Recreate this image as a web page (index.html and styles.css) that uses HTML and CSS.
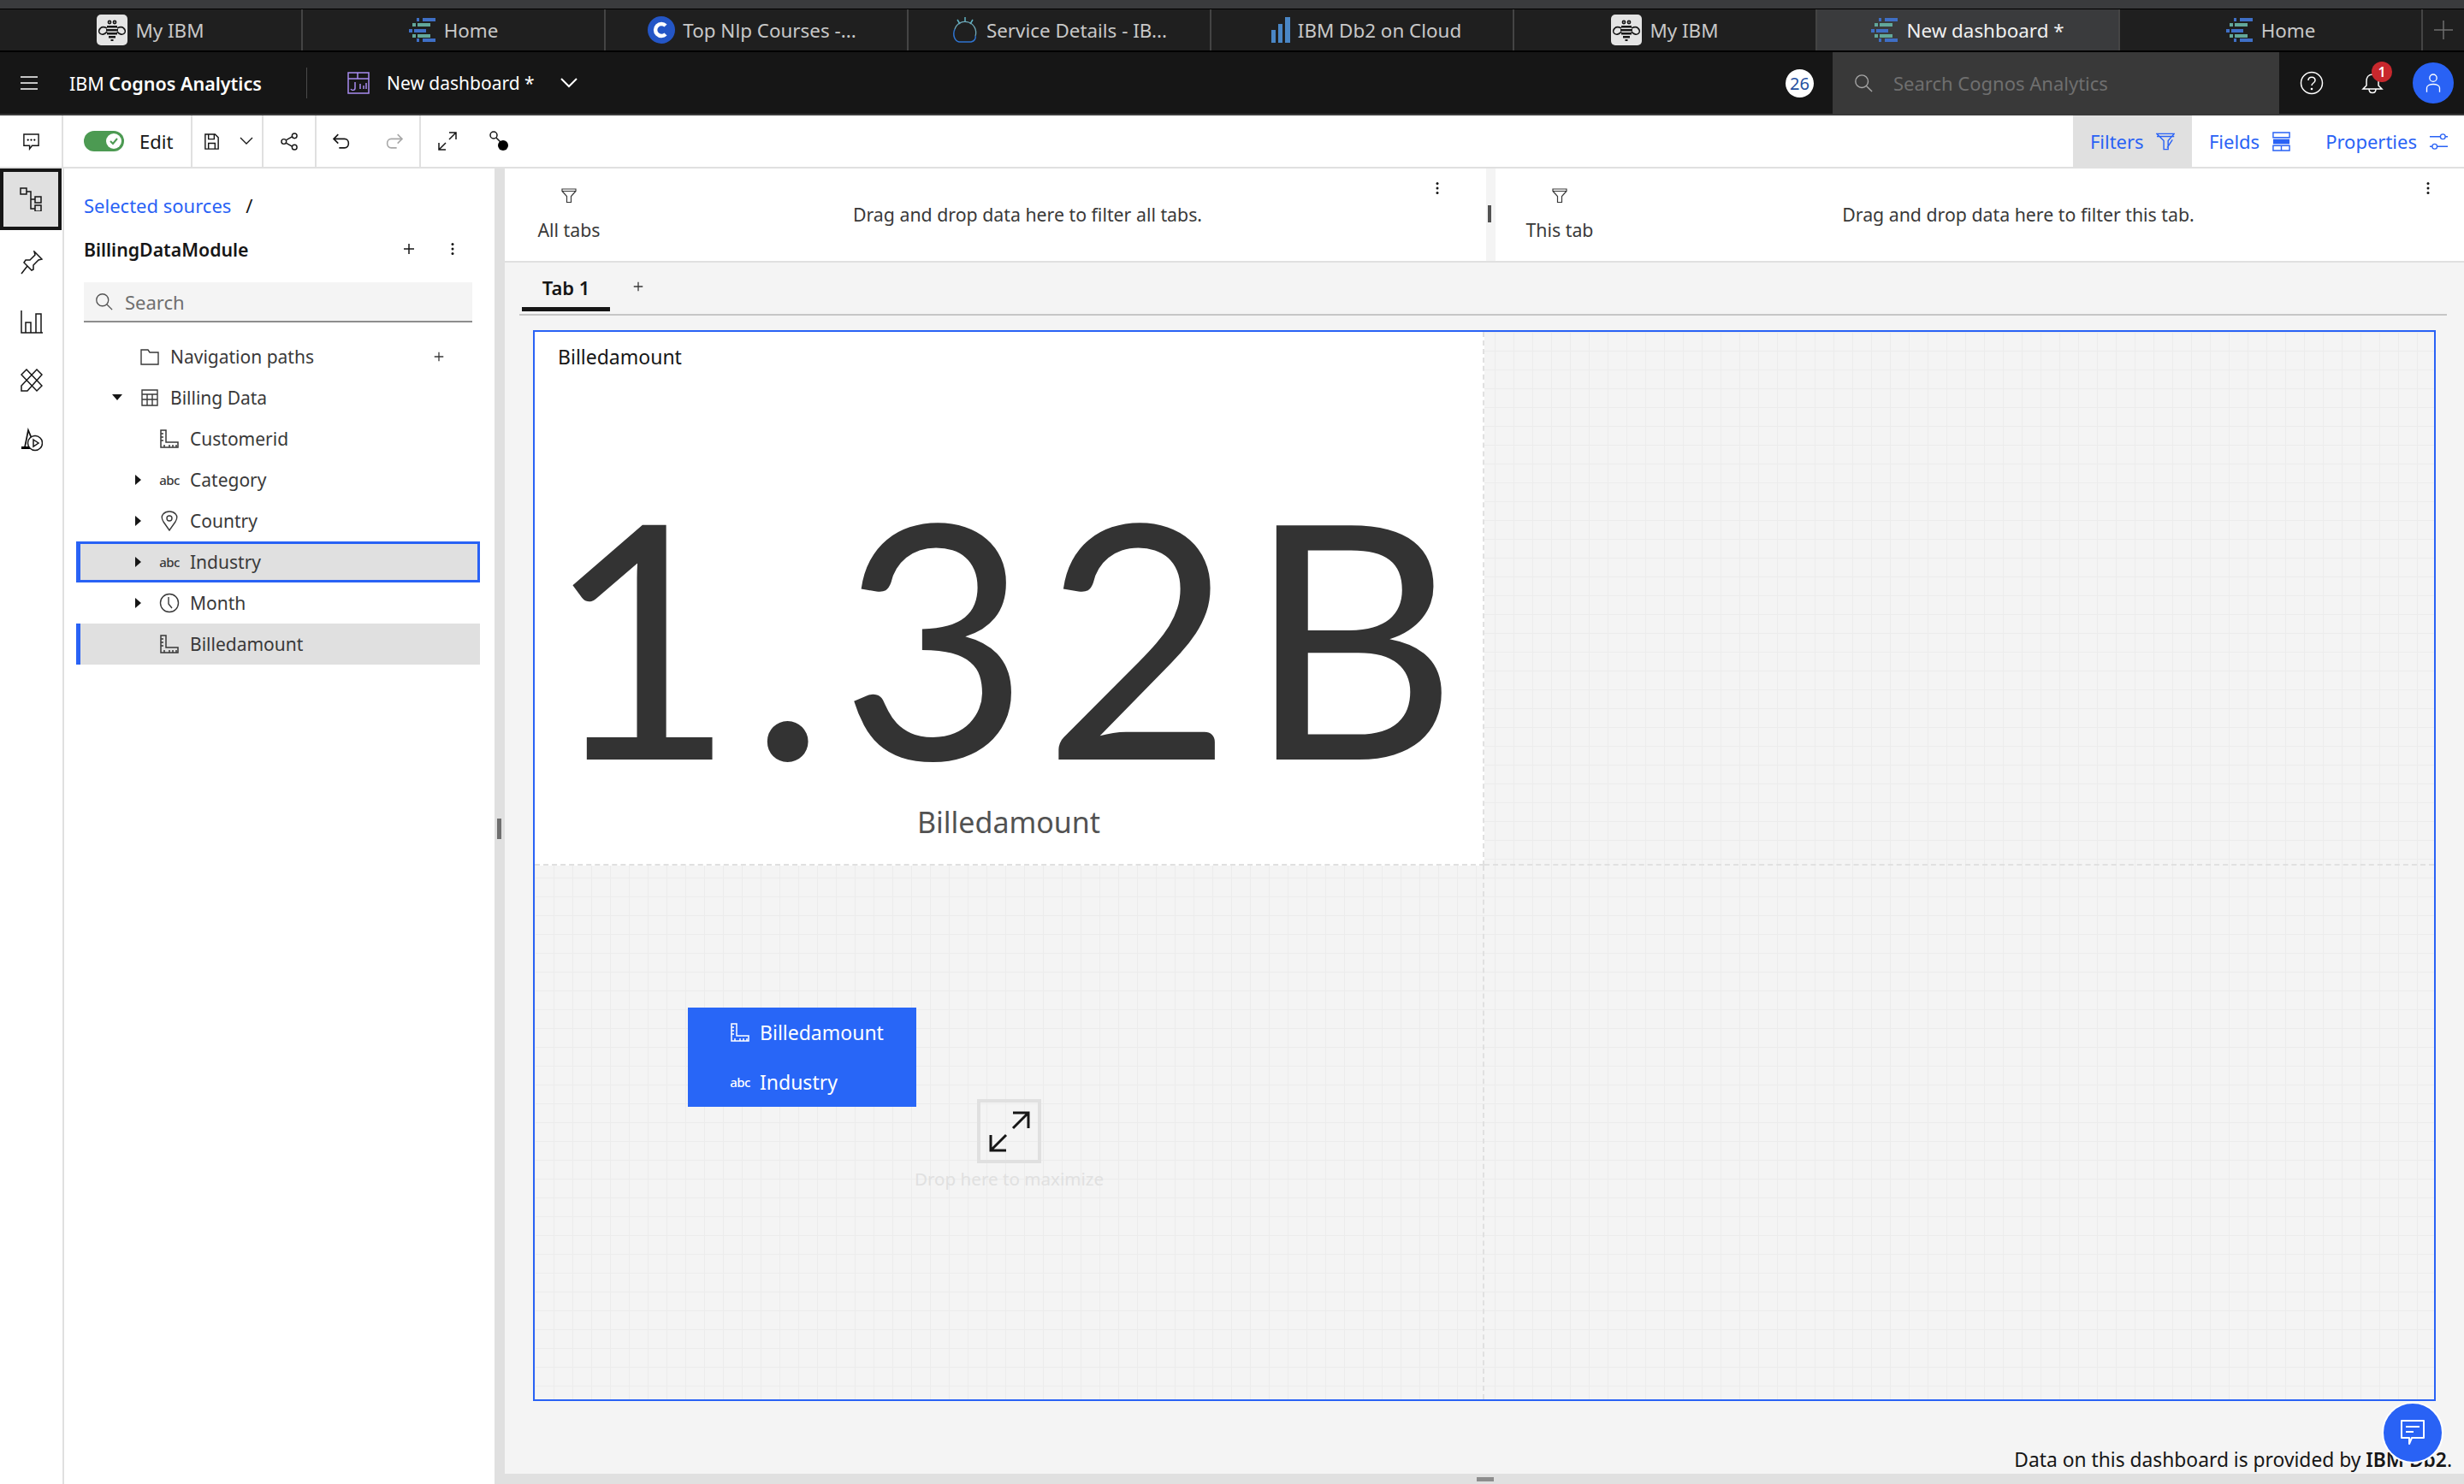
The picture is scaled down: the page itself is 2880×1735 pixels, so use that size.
FILE: index.html
```html
<!DOCTYPE html>
<html>
<head>
    <meta charset="utf-8">
    <title>New dashboard - IBM Cognos Analytics</title>
    <link rel="stylesheet" href="styles.css">
</head>
<body>

<svg class="defs" width="0" height="0">
    <symbol id="i-bee" viewBox="0 0 36 36">
        <rect width="36" height="36" rx="5" fill="#e4e4e4"/>
        <g fill="none" stroke="#161616" stroke-width="1.6">
            <circle cx="15" cy="9" r="1.6"/><circle cx="21" cy="9" r="1.6"/>
            <path d="M12 16 C5 12 2 18 3 21 C5 25 10 23 12 20"/>
            <path d="M24 16 C31 12 34 18 33 21 C31 25 26 23 24 20"/>
        </g>
        <path d="M12 13h12v2.500H12zM11 17h14v2.500H11zM12 21h12v2.500H12zM14 25h8v2.500h-8zM16.500 29h3v2h-3z" fill="#161616"/>
    </symbol>
    <symbol id="i-home" viewBox="0 0 32 28">
        <path d="M9 0h3v4H9zM16 0h15v4H16zM9 24h3v4H9zM16 24h15v4H16zM0 13h4v4H0zM6 13h14v4H6z" fill="#3f6fc6"/>
        <path d="M4 6h4v4H4zM10 6h15v4H10zM4 19h4v4H4zM10 19h15v4H10z" fill="#62a89b"/>
    </symbol>
    <symbol id="i-ruler" viewBox="0 0 24 24">
        <path d="M2 2h6v14h14v6H2z M2 6h3M2 10h3M2 14h3M12 22v-3M16 22v-3M20 22v-3M6 22v-3" fill="none" stroke="currentColor" stroke-width="1.500"/>
    </symbol>
    <symbol id="i-plus" viewBox="0 0 16 16">
        <path d="M8 2v12M2 8h12" fill="none" stroke="currentColor" stroke-width="1.500"/>
    </symbol>
    <symbol id="i-dots" viewBox="0 0 16 16">
        <circle cx="8" cy="2.500" r="1.500" fill="currentColor"/><circle cx="8" cy="8" r="1.500" fill="currentColor"/><circle cx="8" cy="13.500" r="1.500" fill="currentColor"/>
    </symbol>
    <symbol id="i-search" viewBox="0 0 24 24">
        <circle cx="10" cy="10" r="8" fill="none" stroke="currentColor" stroke-width="1.500"/>
        <path d="M16 16l7 7" fill="none" stroke="currentColor" stroke-width="1.500"/>
    </symbol>
    <symbol id="i-funnel" viewBox="0 0 18 18">
        <path d="M1 1h16v2.500l-5.500 6v7h-5v-7L1 3.500z M1 3.500h16" fill="none" stroke="currentColor" stroke-width="1.200"/>
    </symbol>
</svg>

<div class="window-strip"></div>

<div class="browser-tabs">
    <div class="browser-tab"><svg class="tab-bee"><use href="#i-bee"/></svg>My IBM</div>
    <div class="browser-tab"><svg class="tab-home"><use href="#i-home"/></svg>Home</div>
    <div class="browser-tab courses">
        <svg class="tab-round" viewBox="0 0 32 32"><circle cx="16" cy="16" r="16" fill="#2456c6"/><path d="M21 11a7 7 0 1 0 0 10" fill="none" stroke="#fff" stroke-width="4.500"/></svg>
        Top Nlp Courses -...
    </div>
    <div class="browser-tab">
        <svg class="tab-round" viewBox="0 0 32 32"><path d="M16 1v6M7 4l3 5M25 4l-3 5" stroke="#5fb3c4" stroke-width="1.500" fill="none"/><path d="M4 15a12 12 0 0 1 24 8" stroke="#6ea8b8" stroke-width="1.300" fill="none"/><path d="M4 15c-3 7 0 14 5 15h14c4-1 6-4 5-7" stroke="#2f74d0" stroke-width="1.500" fill="none"/></svg>
        Service Details - IB...
    </div>
    <div class="browser-tab db2">
        <svg class="tab-bars" viewBox="0 0 22 30"><path d="M0 15h5v15H0zM8 8h5v22H8zM16 0h6v30h-6z" fill="#4a86c5"/></svg>
        IBM Db2 on Cloud
    </div>
    <div class="browser-tab"><svg class="tab-bee"><use href="#i-bee"/></svg>My IBM</div>
    <div class="browser-tab active"><svg class="tab-home"><use href="#i-home"/></svg>New dashboard *</div>
    <div class="browser-tab"><svg class="tab-home"><use href="#i-home"/></svg>Home</div>
    <div class="browser-add"><svg viewBox="0 0 24 24"><path d="M12 1v22M1 12h22" stroke="#6f6f6f" stroke-width="1.500" fill="none"/></svg></div>
</div>

<header class="app-header">
    <svg class="hamburger" viewBox="0 0 20 16"><path d="M0 1h20M0 8h20M0 15h20" stroke="#fff" stroke-width="1.500"/></svg>
    <div class="brand">IBM <b>Cognos Analytics</b></div>
    <div class="brand-sep"></div>
    <svg class="dash-icon" viewBox="0 0 26 26"><path d="M1 1h24v24H1zM1 8h24M12 1v7M9 12v7c0 3-4 3-5 1M15 14v6M19 16v4M22 13v7" fill="none" stroke="#a88cf0" stroke-width="1.500"/></svg>
    <div class="dash-name">New dashboard *</div>
    <svg class="dash-chevron" viewBox="0 0 20 12"><path d="M1 1l9 9 9-9" fill="none" stroke="#fff" stroke-width="2"/></svg>
    <div class="trial-badge">26</div>
    <div class="global-search">
        <svg class="global-search-icon"><use href="#i-search"/></svg>
        <span>Search Cognos Analytics</span>
    </div>
    <svg class="help-icon" viewBox="0 0 28 28"><circle cx="14" cy="14" r="12.500" fill="none" stroke="#fff" stroke-width="1.500"/><path d="M10 11c0-5 8-5 8 0 0 3-4 3-4 6" fill="none" stroke="#fff" stroke-width="1.500"/><circle cx="14" cy="21" r="1.300" fill="#fff"/></svg>
    <div class="bell">
        <svg viewBox="0 0 26 26"><path d="M13 3c-5 0-7 4-7 8v5l-4 4h22l-4-4v-5c0-4-2-8-7-8zM9 20c0 6 8 6 8 0" fill="none" stroke="#fff" stroke-width="1.500"/></svg>
        <span class="bell-count">1</span>
    </div>
    <div class="avatar">
        <svg viewBox="0 0 24 28"><circle cx="12" cy="7" r="5" fill="none" stroke="#fff" stroke-width="1.600"/><path d="M3 27v-6c0-7 18-7 18 0v6" fill="none" stroke="#fff" stroke-width="1.600"/></svg>
    </div>
</header>

<div class="toolbar">
    <div class="tool-group first">
        <svg class="tool-icon" viewBox="0 0 22 22"><path d="M2 2h18v14h-8l-3 4v-4H2z" fill="none" stroke="#161616" stroke-width="1.500"/><circle cx="7" cy="9" r="1.200"/><circle cx="11" cy="9" r="1.200"/><circle cx="15" cy="9" r="1.200"/></svg>
    </div>
    <div class="tool-group edit">
        <div class="toggle"><span class="toggle-knob"><svg viewBox="0 0 12 12"><path d="M2 6l3 3 5-6" fill="none" stroke="#4c9a52" stroke-width="2"/></svg></span></div>
        <span>Edit</span>
    </div>
    <div class="tool-group save">
        <svg class="tool-icon" viewBox="0 0 20 22"><path d="M2 2h12l4 4v14H2zM6 2v6h7V2M6 20v-7h8v7" fill="none" stroke="#161616" stroke-width="1.500"/></svg>
        <svg class="tool-chevron" viewBox="0 0 16 10"><path d="M1 1l7 7 7-7" fill="none" stroke="#161616" stroke-width="1.300"/></svg>
    </div>
    <div class="tool-group share">
        <svg class="tool-icon" viewBox="0 0 22 22"><circle cx="4" cy="11" r="3" fill="none" stroke="#161616" stroke-width="1.500"/><circle cx="17" cy="4" r="3" fill="none" stroke="#161616" stroke-width="1.500"/><circle cx="17" cy="18" r="3" fill="none" stroke="#161616" stroke-width="1.500"/><path d="M7 9l7-4M7 13l7 4" stroke="#161616" stroke-width="1.500"/></svg>
    </div>
    <div class="tool-group history">
        <svg class="tool-icon" viewBox="0 0 20 20"><path d="M6 2L1 7l5 5M1 7h12c6 0 6 10 0 10H7" fill="none" stroke="#161616" stroke-width="1.500"/></svg>
        <svg class="tool-icon" viewBox="0 0 20 20"><path d="M14 2l5 5-5 5M19 7H7c-6 0-6 10 0 10h6" fill="none" stroke="#a8a8a8" stroke-width="1.500"/></svg>
    </div>
    <div class="tool-group fit">
        <svg class="tool-icon wide" viewBox="0 0 24 24"><path d="M14 2h8v8M22 2L14 10M10 22H2v-8M2 22l8-8" fill="none" stroke="#161616" stroke-width="1.500"/></svg>
        <svg class="tool-icon wide" viewBox="0 0 24 24"><circle cx="6" cy="5" r="4" fill="none" stroke="#161616" stroke-width="1.500"/><path d="M9 8l6 6" stroke="#161616" stroke-width="1.500"/><circle cx="17" cy="17" r="6"/></svg>
    </div>
    <div class="tool-tabs">
        <div class="tool-tab selected">Filters
            <svg viewBox="0 0 22 22"><path d="M1 2h20l-7 8v10H9V10zM1 5h20M13 18l6-9" fill="none" stroke="#2962f5" stroke-width="1.400"/></svg>
        </div>
        <div class="tool-tab">Fields
            <svg viewBox="0 0 24 24"><path d="M2 1h20v6H2zM2 17h20v6H2zM12 17v6" fill="none" stroke="#2962f5" stroke-width="1.500"/><path d="M2 9h20v6H2z" fill="#2962f5"/></svg>
        </div>
        <div class="tool-tab props">Properties
            <svg viewBox="0 0 24 22"><path d="M1 5h13M20 5h3M1 17h3M10 17h13" stroke="#2962f5" stroke-width="1.400"/><circle cx="17" cy="5" r="3" fill="none" stroke="#2962f5" stroke-width="1.400"/><circle cx="7" cy="17" r="3" fill="none" stroke="#2962f5" stroke-width="1.400"/></svg>
        </div>
    </div>
</div>

<div class="workspace">
    <nav class="rail">
        <div class="rail-item selected">
            <svg viewBox="0 0 26 28"><path d="M1 1h7v7H1zM18 11h7v7h-7zM18 21h7v7h-7zM8 5h5v20h5M13 14h5" fill="none" stroke="#161616" stroke-width="1.500"/></svg>
        </div>
        <div class="rail-item">
            <svg viewBox="0 0 26 28"><path d="M16 1l9 9-4 1-6 6 0 5-2 1-9-9 2-3 5 0 6-6zM8 18l-7 9" fill="none" stroke="#161616" stroke-width="1.500"/></svg>
        </div>
        <div class="rail-item">
            <svg viewBox="0 0 26 28"><path d="M1 1v26h25M6 27v-12h6v12M18 27V5h6v22" fill="none" stroke="#161616" stroke-width="1.500"/></svg>
        </div>
        <div class="rail-item">
            <svg viewBox="0 0 26 28"><path d="M7 1L1 7l18 19 6-6zM19 1l6 6L8 26H1v-6z" fill="none" stroke="#161616" stroke-width="1.500"/></svg>
        </div>
        <div class="rail-item">
            <svg viewBox="0 0 26 28"><path d="M1 23h10M5 23l4-20 5 12" fill="none" stroke="#161616" stroke-width="1.800"/><path d="M1 25h11v-3H1z"/><circle cx="17" cy="18" r="8.500" fill="#fff" stroke="#161616" stroke-width="1.500"/><path d="M15 14l6 4-6 4z" fill="none" stroke="#161616" stroke-width="1.500"/></svg>
        </div>
    </nav>

    <aside class="sidebar">
        <div class="crumbs"><a>Selected sources</a><span>/</span></div>
        <div class="module">
            <strong>BillingDataModule</strong>
            <svg class="module-plus"><use href="#i-plus"/></svg>
            <svg class="module-dots"><use href="#i-dots"/></svg>
        </div>
        <div class="tree-search">
            <svg><use href="#i-search"/></svg>
            <span>Search</span>
        </div>
        <div class="tree">
            <div class="tree-row level-1">
                <span class="caret"></span>
                <svg class="node-icon" viewBox="0 0 24 24"><path d="M2 4h8l2 3h10v14H2z" fill="none" stroke="currentColor" stroke-width="1.400"/></svg>
                <span>Navigation paths</span>
                <svg class="row-plus"><use href="#i-plus"/></svg>
            </div>
            <div class="tree-row level-1">
                <span class="caret open"></span>
                <svg class="node-icon" viewBox="0 0 24 24"><path d="M3 3h18v18H3zM3 8h18M3 14h18M9 8v13M15 8v13" fill="none" stroke="currentColor" stroke-width="1.400"/></svg>
                <span>Billing Data</span>
            </div>
            <div class="tree-row level-2">
                <span class="caret"></span>
                <svg class="node-icon"><use href="#i-ruler"/></svg>
                <span>Customerid</span>
            </div>
            <div class="tree-row level-2">
                <span class="caret closed"></span>
                <span class="abc">abc</span>
                <span>Category</span>
            </div>
            <div class="tree-row level-2">
                <span class="caret closed"></span>
                <svg class="node-icon" viewBox="0 0 24 24"><path d="M12 23L5 13c-5-8 2-12 7-12s12 4 7 12z" fill="none" stroke="currentColor" stroke-width="1.400"/><circle cx="12" cy="9" r="3" fill="none" stroke="currentColor" stroke-width="1.400"/></svg>
                <span>Country</span>
            </div>
            <div class="tree-row level-2 focused">
                <span class="caret closed"></span>
                <span class="abc">abc</span>
                <span>Industry</span>
            </div>
            <div class="tree-row level-2">
                <span class="caret closed"></span>
                <svg class="node-icon" viewBox="0 0 24 24"><circle cx="12" cy="12" r="10.500" fill="none" stroke="currentColor" stroke-width="1.400"/><path d="M11 5v8l4 5" fill="none" stroke="currentColor" stroke-width="1.400"/></svg>
                <span>Month</span>
            </div>
            <div class="tree-row level-2 picked">
                <span class="caret"></span>
                <svg class="node-icon"><use href="#i-ruler"/></svg>
                <span>Billedamount</span>
            </div>
        </div>
    </aside>

    <div class="splitter"><span class="splitter-grip"></span></div>

    <main class="board">
        <div class="filter-row">
            <section class="filter-panel all">
                <div class="filter-label"><svg><use href="#i-funnel"/></svg><span>All tabs</span></div>
                <div class="filter-message">Drag and drop data here to filter all tabs.</div>
                <svg class="filter-dots"><use href="#i-dots"/></svg>
            </section>
            <div class="filter-gap"><span></span></div>
            <section class="filter-panel this">
                <div class="filter-label"><svg><use href="#i-funnel"/></svg><span>This tab</span></div>
                <div class="filter-message">Drag and drop data here to filter this tab.</div>
                <svg class="filter-dots"><use href="#i-dots"/></svg>
            </section>
        </div>

        <div class="tab-row">
            <div class="tab-current">Tab 1</div>
            <svg class="tab-plus"><use href="#i-plus"/></svg>
        </div>

        <div class="canvas">
            <div class="widget">
                <div class="widget-title">Billedamount</div>
                <div class="widget-value">1.32B</div>
                <div class="widget-label">Billedamount</div>
            </div>
            <div class="cell cell-right"></div>
            <div class="cell cell-low"></div>
            <div class="cell"></div>

            <div class="drag-tile">
                <div class="drag-row"><svg class="node-icon"><use href="#i-ruler"/></svg>Billedamount</div>
                <div class="drag-row"><span class="abc">abc</span>Industry</div>
            </div>
            <div class="maximize">
                <div class="maximize-box">
                    <svg viewBox="0 0 48 50"><path d="M28 3h18v18M46 3L28 21M20 29L2 47M2 29v18h18" fill="none" stroke="#161616" stroke-width="3"/></svg>
                </div>
                <span>Drop here to maximize</span>
            </div>
        </div>

        <footer class="board-note">Data on this dashboard is provided by&nbsp;<b>IBM Db2</b>.</footer>
        <div class="board-bottom"><span></span></div>
    </main>
</div>

<div class="chat-fab">
    <svg viewBox="0 0 30 32"><path d="M2 2h26v20H14l-3 7v-7H2z" fill="none" stroke="#fff" stroke-width="2" stroke-linejoin="round"/><path d="M7 9h16M7 15h9" stroke="#fff" stroke-width="2"/></svg>
</div>

</body>
</html>
```
FILE: styles.css
```css
* {
    box-sizing: border-box;
}

html, body {
    margin: 0;
    height: 100%;
}

body {
    position: relative;
    display: flex;
    flex-direction: column;
    height: 1735px;
    overflow: hidden;
    font-family: "Noto Sans", "Liberation Sans", sans-serif;
    font-size: 22px;
    color: #161616;
    background: #fff;
}

.defs {
    position: absolute;
}

/* browser chrome */
.window-strip {
    height: 10px;
    background: #3a3b3d;
}

.browser-tabs {
    display: flex;
    height: 51px;
    background: #1f1f1f;
    border-top: 1px solid #000;
    border-bottom: 2px solid #000;
    color: #c8c8c8;
    font-size: 22.4px;
}

.browser-tab {
    flex: 0 0 354px;
    display: flex;
    align-items: center;
    justify-content: center;
    gap: 9px;
    border-right: 2px solid #444;
    white-space: nowrap;
}

.browser-tab.courses {
    padding-right: 10px;
}

.browser-tab.db2 {
    padding-left: 10px;
}

.browser-tab.active {
    background: #3a3b3d;
    color: #f0f0f0;
}

.browser-add {
    flex: 1;
    display: flex;
    align-items: center;
    justify-content: center;
}

.browser-add svg {
    width: 24px;
    height: 24px;
}

.tab-bee {
    width: 36px;
    height: 36px;
}

.tab-home {
    width: 32px;
    height: 28px;
}

.tab-round {
    width: 32px;
    height: 32px;
}

.tab-bars {
    width: 22px;
    height: 30px;
}

/* app header */
.app-header {
    display: flex;
    align-items: center;
    height: 74px;
    padding-left: 24px;
    background: #161616;
    border-bottom: 2px solid #3a3a3a;
    color: #fff;
}

.hamburger {
    width: 20px;
    height: 16px;
}

.brand {
    margin-left: 37px;
    width: 225px;
    font-size: 21.5px;
    white-space: nowrap;
}

.brand b {
    font-weight: 600;
}

.brand-sep {
    width: 1px;
    height: 36px;
    margin-left: 52px;
    background: #4a4a4a;
}

.dash-icon {
    width: 26px;
    height: 26px;
    margin-left: 47px;
}

.dash-name {
    margin-left: 20px;
    width: 173px;
    font-size: 21px;
    white-space: nowrap;
}

.dash-chevron {
    width: 20px;
    height: 12px;
    margin-left: 30px;
}

.trial-badge {
    display: flex;
    align-items: center;
    justify-content: center;
    width: 33px;
    height: 33px;
    margin-left: auto;
    border-radius: 50%;
    background: #fff;
    color: #24509f;
    font-size: 20px;
}

.global-search {
    display: flex;
    align-items: center;
    align-self: stretch;
    width: 522px;
    margin-left: 22px;
    padding-left: 25px;
    background: #393939;
    color: #6f6f6f;
}

.global-search-icon {
    width: 22px;
    height: 22px;
    margin-right: 24px;
    color: #a8a8a8;
}

.help-icon {
    width: 28px;
    height: 28px;
    margin-left: 24px;
}

.bell {
    position: relative;
    width: 26px;
    height: 26px;
    margin-left: 44px;
}

.bell svg {
    width: 26px;
    height: 26px;
}

.bell-count {
    position: absolute;
    top: -12px;
    left: 12px;
    width: 24px;
    height: 24px;
    border-radius: 50%;
    background: #c8282d;
    font-size: 16px;
    line-height: 24px;
    text-align: center;
    font-weight: 600;
}

.avatar {
    display: flex;
    align-items: center;
    justify-content: center;
    width: 48px;
    height: 48px;
    margin-left: 34px;
    margin-right: 12px;
    border-radius: 50%;
    background: #2962f5;
}

.avatar svg {
    width: 20px;
    height: 26px;
}

/* toolbar */
.toolbar {
    display: flex;
    height: 62px;
    background: #fff;
    border-bottom: 2px solid #e0e0e0;
}

.tool-group {
    display: flex;
    align-items: center;
    justify-content: center;
    border-right: 2px solid #e0e0e0;
}

.tool-group.first {
    width: 74px;
}

.tool-group.edit {
    width: 151px;
    justify-content: flex-start;
    padding-left: 24px;
    gap: 18px;
}

.tool-group.save {
    width: 83px;
    padding-left: 2px;
    gap: 22px;
}

.tool-group.share {
    width: 62px;
}

.tool-group.history {
    width: 122px;
    gap: 40px;
}

.tool-group.fit {
    width: 134px;
    justify-content: flex-start;
    padding-left: 19px;
    gap: 36px;
    border-right: 0;
}

.tool-icon {
    width: 21px;
    height: 21px;
}

.tool-icon.wide {
    width: 24px;
    height: 24px;
}

.tool-chevron {
    width: 16px;
    height: 10px;
}

.toggle {
    display: flex;
    align-items: center;
    justify-content: flex-end;
    width: 47px;
    height: 24px;
    padding-right: 3px;
    border-radius: 12px;
    background: #4c9a52;
}

.toggle-knob {
    display: flex;
    align-items: center;
    justify-content: center;
    width: 18px;
    height: 18px;
    border-radius: 50%;
    background: #fff;
}

.toggle-knob svg {
    width: 12px;
    height: 12px;
}

.tool-tabs {
    display: flex;
    margin-left: auto;
}

.tool-tab {
    display: flex;
    align-items: center;
    gap: 14px;
    padding: 0 20px;
    color: #2962f5;
}

.tool-tab.selected {
    background: #e0e0e0;
    width: 139px;
}

.tool-tab.props {
    padding-right: 18px;
}

.tool-tab svg {
    width: 23px;
    height: 23px;
}

/* main part */
.workspace {
    flex: 1;
    display: flex;
    min-height: 0;
}

.rail {
    flex: 0 0 75px;
    border-right: 2px solid #e0e0e0;
}

.rail-item {
    display: flex;
    align-items: center;
    justify-content: center;
    height: 69px;
}

.rail-item svg {
    width: 26px;
    height: 28px;
}

.rail-item.selected {
    width: 72px;
    height: 72px;
    margin-bottom: 3px;
    background: #e0e0e0;
    border: 4px solid #161616;
}

.sidebar {
    flex: 0 0 503px;
    background: #fff;
    color: #393939;
    font-size: 21px;
}

.crumbs {
    display: flex;
    gap: 17px;
    height: 28px;
    margin: 29px 0 0 23px;
    font-size: 22px;
    line-height: 28px;
}

.crumbs a {
    color: #2962f5;
}

.crumbs span {
    color: #161616;
}

.module {
    display: flex;
    align-items: center;
    height: 30px;
    margin: 22px 0 0 23px;
    font-size: 21.3px;
    color: #161616;
}

.module strong {
    font-weight: 600;
    width: 372px;
}

.module-plus {
    width: 16px;
    height: 16px;
}

.module-dots {
    width: 16px;
    height: 16px;
    margin-left: 35px;
}

.tree-search {
    display: flex;
    align-items: center;
    width: 454px;
    height: 47px;
    margin: 24px 0 0 23px;
    padding-left: 13px;
    background: #f4f4f4;
    border-bottom: 2px solid #8d8d8d;
    color: #6f6f6f;
    font-size: 22px;
}

.tree-search svg {
    width: 21px;
    height: 21px;
    margin-right: 14px;
    color: #525252;
}

.tree {
    margin: 16px 17px 0 14px;
}

.tree-row {
    display: flex;
    align-items: center;
    gap: 12px;
    height: 48px;
}

.tree-row.level-1 {
    padding-left: 38px;
}

.tree-row.level-2 {
    padding-left: 61px;
}

.tree-row.focused {
    background: #e0e0e0;
    box-shadow: inset 5px 0 0 #2962f5, inset -3px 0 0 #2962f5, inset 0 3px 0 #2962f5, inset 0 -3px 0 #2962f5;
}

.tree-row.picked {
    background: #e0e0e0;
    box-shadow: inset 5px 0 0 #2962f5;
}

.caret {
    position: relative;
    flex: 0 0 24px;
    height: 16px;
}

.caret.open::before {
    content: "";
    position: absolute;
    left: 4px;
    top: 4px;
    border-left: 6px solid transparent;
    border-right: 6px solid transparent;
    border-top: 7px solid #161616;
}

.caret.closed::before {
    content: "";
    position: absolute;
    left: 8px;
    top: 2px;
    border-top: 6px solid transparent;
    border-bottom: 6px solid transparent;
    border-left: 7px solid #161616;
}

.node-icon {
    flex: 0 0 24px;
    width: 24px;
    height: 24px;
}

.abc {
    flex: 0 0 24px;
    font-size: 15px;
    font-weight: 500;
    text-align: center;
    letter-spacing: -0.5px;
}

.row-plus {
    width: 14px;
    height: 14px;
    margin-left: auto;
    margin-right: 41px;
}

.splitter {
    flex: 0 0 12px;
    position: relative;
    background: #e0e0e0;
}

.splitter-grip {
    position: absolute;
    left: 3px;
    top: 760px;
    width: 5px;
    height: 24px;
    background: #6f6f6f;
}

.board {
    flex: 1;
    display: flex;
    flex-direction: column;
    min-width: 0;
    background: #f4f4f4;
}

.filter-row {
    display: flex;
    height: 110px;
    border-bottom: 2px solid #e0e0e0;
}

.filter-panel {
    display: flex;
    background: #fff;
    color: #393939;
    font-size: 21.3px;
}

.filter-panel.all {
    width: 1147px;
}

.filter-panel.this {
    flex: 1;
}

.filter-gap {
    flex: 0 0 11px;
    position: relative;
    background: #f4f4f4;
}

.filter-gap span {
    position: absolute;
    left: 2px;
    top: 43px;
    width: 4px;
    height: 20px;
    background: #525252;
}

.filter-label {
    flex: 0 0 150px;
    display: flex;
    flex-direction: column;
    align-items: center;
    padding-top: 23px;
    gap: 16px;
}

.filter-label svg {
    width: 18px;
    height: 18px;
}

.filter-message {
    flex: 1;
    display: flex;
    align-items: center;
    justify-content: center;
    padding-bottom: 2px;
}

.filter-dots {
    flex: 0 0 16px;
    width: 16px;
    height: 16px;
    margin: 15px 34px 0 10px;
    color: #161616;
}

.filter-panel.all .filter-dots {
    margin-right: 49px;
}

.tab-row {
    display: flex;
    align-items: flex-start;
    height: 62px;
    margin: 0 20px 0 17px;
    border-bottom: 2px solid #c6c6c6;
}

.tab-current {
    width: 103px;
    height: 57px;
    margin-left: 3px;
    padding-top: 14px;
    font-weight: 600;
    text-align: center;
    border-bottom: 5px solid #161616;
}

.tab-plus {
    width: 14px;
    height: 14px;
    margin: 21px 0 0 26px;
    color: #393939;
}

.canvas {
    position: relative;
    flex: 1;
    display: grid;
    grid-template-columns: 1110px 1fr;
    grid-template-rows: 624px 1fr;
    margin: 17px 33px 0;
    border: 2px solid #2962f5;
    background-color: #f4f4f4;
    background-image:
        linear-gradient(#ececec 1px, transparent 1px),
        linear-gradient(90deg, #ececec 1px, transparent 1px);
    background-size: 22px 22px;
}

.widget {
    display: flex;
    flex-direction: column;
    background: #fff;
    border-right: 2px dashed #e0e0e0;
    border-bottom: 2px dashed #e0e0e0;
}

.widget-title {
    padding: 14px 0 0 27px;
    font-size: 23px;
    line-height: 30px;
    color: #161616;
}

.widget-value {
    margin-top: 138px;
    font-family: "Lato", sans-serif;
    font-size: 382px;
    line-height: 340px;
    letter-spacing: 16px;
    text-align: center;
    color: #333;
    white-space: nowrap;
}

.widget-label {
    margin-top: 29px;
    font-size: 34px;
    line-height: 44px;
    text-align: center;
    color: #525252;
}

.cell-right {
    border-bottom: 2px dashed #e0e0e0;
}

.cell-low {
    border-right: 2px dashed #e0e0e0;
}

.drag-tile {
    position: absolute;
    left: 179px;
    top: 790px;
    width: 267px;
    height: 116px;
    padding-left: 49px;
    background: #2866f7;
    color: #fff;
    font-size: 23px;
}

.drag-row {
    display: flex;
    align-items: center;
    gap: 11px;
    height: 58px;
}

.maximize {
    position: absolute;
    left: 444px;
    top: 897px;
    width: 221px;
    display: flex;
    flex-direction: column;
    align-items: center;
    color: #e0e0e0;
    font-size: 20.6px;
}

.maximize-box {
    display: flex;
    align-items: center;
    justify-content: center;
    width: 75px;
    height: 75px;
    border: 4px solid #e0e0e0;
}

.maximize-box svg {
    width: 48px;
    height: 50px;
}

.maximize span {
    margin-top: 4px;
    white-space: nowrap;
}

.board-note {
    display: flex;
    justify-content: flex-end;
    align-items: flex-end;
    height: 85px;
    padding-right: 14px;
    font-size: 22.8px;
    line-height: 32px;
}

.board-note b {
    font-weight: 600;
}

.board-bottom {
    position: relative;
    height: 12px;
    background: #e0e0e0;
}

.board-bottom span {
    position: absolute;
    left: 1136px;
    top: 4px;
    width: 20px;
    height: 5px;
    background: #8d8d8d;
}

.chat-fab {
    position: absolute;
    right: 24px;
    bottom: 24px;
    display: flex;
    align-items: center;
    justify-content: center;
    width: 72px;
    height: 72px;
    border: 2px solid #fff;
    border-radius: 50%;
    background: #2962f5;
}

.chat-fab svg {
    width: 30px;
    height: 32px;
}
```
